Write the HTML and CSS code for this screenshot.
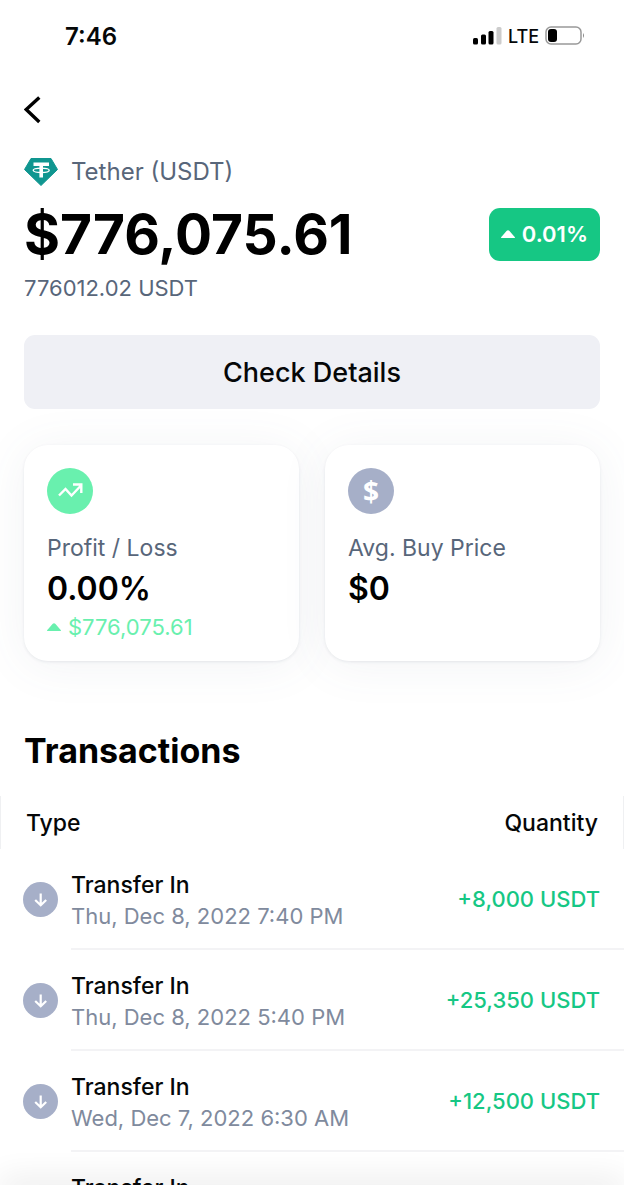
FILE: index.html
```html
<!DOCTYPE html>
<html lang="en">
<head>
<meta charset="utf-8">
<meta name="viewport" content="width=device-width, initial-scale=1">
<title>Tether (USDT)</title>
<link rel="stylesheet" href="styles.css">
</head>
<body>
<svg width="0" height="0" class="defs" aria-hidden="true">
  <symbol id="arrow-down" viewBox="0 0 35 35">
    <circle cx="17.5" cy="17.5" r="17.5" fill="#a6afc8"/>
    <path d="M17.7 11.5V23M12.2 18l5.5 5.3 5.5-5.3" fill="none" stroke="#fff" stroke-width="2.2"/>
  </symbol>
</svg>
<div class="app">
  <header class="status">
    <span class="time">7:46</span>
    <div class="signals">
      <svg width="29" height="20" viewBox="0 0 29 20" aria-hidden="true">
        <rect x="0" y="12" width="5" height="6.500" rx="1.500"/>
        <rect x="8" y="8.500" width="5" height="10" rx="1.500"/>
        <rect x="15.500" y="5" width="5" height="13.500" rx="1.500"/>
        <rect x="23.500" y="1" width="5" height="17.500" rx="1.500" fill="#ccc"/>
      </svg>
      <span class="lte">LTE</span>
      <svg width="40" height="20" viewBox="0 0 40 20" aria-hidden="true">
        <rect x="1" y="1" width="35" height="17" rx="5" fill="none" stroke="#999" stroke-width="1.500"/>
        <rect x="3" y="3" width="9" height="13" rx="3"/>
        <path d="M38 7q2 2.500 0 5z" fill="#888"/>
      </svg>
    </div>
  </header>

  <main class="content">
    <button class="back" type="button" aria-label="Back">
      <svg width="18" height="28" viewBox="0 0 18 28" aria-hidden="true"><path d="M15.300 1.500L2.200 13.500l13.100 12.500" fill="none" stroke="#000" stroke-width="3.400"/></svg>
    </button>

    <section class="summary">
      <div class="asset">
        <svg width="34" height="28" viewBox="0 0 34 28" aria-hidden="true">
          <path d="M7 .5h20L33.500 11.500 17 27.500.500 11.500z" fill="#109690" stroke="#109690" stroke-linejoin="round"/>
          <path d="M9.500 4.500h15.500v3.500h-6v11.500h-3.600V8H9.500z" fill="#fff"/>
          <ellipse cx="17.200" cy="12.300" rx="8" ry="2.200" fill="none" stroke="#fff" stroke-width="1.400"/>
        </svg>
        <span>Tether (USDT)</span>
      </div>
      <div class="balance">
        <h1 class="amount">$776,075.61</h1>
        <span class="badge">
          <svg width="14" height="8" viewBox="0 0 14 8" aria-hidden="true"><path d="M0 8q0-1 1-1.800L5.500 1Q7-.5 8.500 1L13 6.200Q14 7 14 8z" fill="currentColor"/></svg>
          0.01%
        </span>
      </div>
      <p class="units">776012.02 USDT</p>
    </section>

    <button class="details" type="button">Check Details</button>

    <section class="cards">
      <article class="card">
        <svg width="46" height="46" viewBox="0 0 46 46" aria-hidden="true">
          <circle cx="23" cy="23" r="23" fill="#69f0ae"/>
          <path d="M12 27.500l6.500-6.500 6 6.500 9.500-10M26 16.500h8.300v8.500" fill="none" stroke="#fff" stroke-width="2.400"/>
        </svg>
        <h2 class="label">Profit / Loss</h2>
        <p class="value">0.00%</p>
        <p class="change">
          <svg width="14" height="8" viewBox="0 0 14 8" aria-hidden="true"><path d="M0 8q0-1 1-1.800L5.500 1Q7-.5 8.500 1L13 6.200Q14 7 14 8z" fill="currentColor"/></svg>
          $776,075.61
        </p>
      </article>
      <article class="card">
        <span class="coin" aria-hidden="true">$</span>
        <h2 class="label">Avg. Buy Price</h2>
        <p class="value">$0</p>
      </article>
    </section>

    <h2 class="title">Transactions</h2>
    <table class="list">
      <thead>
        <tr><th class="type" colspan="2" scope="col">Type</th><th class="quantity" scope="col">Quantity</th></tr>
      </thead>
      <tbody>
        <tr>
          <td class="icon"><svg width="35" height="35" aria-hidden="true"><use href="#arrow-down"/></svg></td>
          <td class="entry"><div class="name">Transfer In</div><div class="date">Thu, Dec 8, 2022 7:40 PM</div></td>
          <td class="sum">+8,000 USDT</td>
        </tr>
        <tr>
          <td class="icon"><svg width="35" height="35" aria-hidden="true"><use href="#arrow-down"/></svg></td>
          <td class="entry"><div class="name">Transfer In</div><div class="date">Thu, Dec 8, 2022 5:40 PM</div></td>
          <td class="sum">+25,350 USDT</td>
        </tr>
        <tr>
          <td class="icon"><svg width="35" height="35" aria-hidden="true"><use href="#arrow-down"/></svg></td>
          <td class="entry"><div class="name">Transfer In</div><div class="date">Wed, Dec 7, 2022 6:30 AM</div></td>
          <td class="sum">+12,500 USDT</td>
        </tr>
        <tr>
          <td class="icon"><svg width="35" height="35" aria-hidden="true"><use href="#arrow-down"/></svg></td>
          <td class="entry"><div class="name">Transfer In</div><div class="date"></div></td>
          <td class="sum"></td>
        </tr>
      </tbody>
    </table>
  </main>
  <footer class="dock"></footer>
</div>
</body>
</html>
```

FILE: styles.css
```css
* { box-sizing: border-box; }

body {
  margin: 0;
  background: #fff;
  color: #050708;
  font-family: Inter, "Liberation Sans", sans-serif;
}

h1, h2, p { margin: 0; }

button {
  border: 0;
  padding: 0;
  background: none;
  color: inherit;
  font: inherit;
}

svg { display: block; flex: none; }

.defs { position: absolute; }

.app {
  display: flex;
  flex-direction: column;
  height: 100vh;
}

.status {
  display: flex;
  flex: none;
  align-items: center;
  justify-content: space-between;
  height: 72px;
  padding: 0 39px 0 65px;
}

.time { font-size: 24px; font-weight: 600; }

.signals { display: flex; align-items: center; gap: 6px; }

.lte { font-size: 18px; font-weight: 500; }

.content {
  flex: 1;
  min-height: 0;
  overflow: hidden;
}

.back {
  display: block;
  margin: 0 24px;
  padding: 24px 0 20px;
}

.summary { padding: 12px 24px 0; }

.asset {
  display: flex;
  align-items: center;
  gap: 13px;
  color: #58667a;
  font-size: 24px;
  line-height: 32px;
}

.balance {
  display: flex;
  align-items: center;
  justify-content: space-between;
  margin-top: 14px;
}

.amount {
  color: #000;
  font-size: 55px;
  font-weight: 700;
  line-height: 64px;
}

.badge {
  display: flex;
  align-items: center;
  gap: 7px;
  height: 53px;
  padding: 0 12px;
  border-radius: 11px;
  background: #16c784;
  color: #fff;
  font-size: 22px;
  font-weight: 600;
}

.units {
  margin-top: 8px;
  color: #58667a;
  font-size: 22px;
  line-height: 28px;
}

.details {
  display: block;
  width: calc(100% - 48px);
  height: 74px;
  margin: 33px 24px 36px;
  border-radius: 11px;
  background: #eff0f5;
  font-size: 27px;
  font-weight: 500;
}

.cards {
  display: grid;
  grid-template-columns: 1fr 1fr;
  gap: 26px;
  padding: 0 24px;
}

.card {
  min-height: 216px;
  padding: 23px 23px 21px;
  border-radius: 24px;
  background: #fff;
  box-shadow: 0 1px 3px rgba(88, 102, 126, 0.12), 0 4px 48px rgba(88, 102, 126, 0.08);
}

.coin {
  display: flex;
  align-items: center;
  justify-content: center;
  width: 46px;
  height: 46px;
  border-radius: 50%;
  background: #a6afc8;
  color: #fff;
  font-family: "Open Sans", sans-serif;
  font-size: 28px;
  font-weight: 700;
}

.label {
  margin-top: 18px;
  color: #58667a;
  font-size: 23px;
  font-weight: 400;
  line-height: 32px;
}

.value {
  color: #000;
  font-size: 32px;
  font-weight: 600;
  line-height: 50px;
}

.change {
  display: flex;
  align-items: center;
  gap: 7px;
  color: #69f0ae;
  font-size: 22px;
  line-height: 26px;
}

.title {
  margin: 68px 24px 0;
  color: #000;
  font-size: 34px;
  font-weight: 700;
  line-height: 44px;
}

.list {
  width: 100%;
  margin-top: 23px;
  border-collapse: separate;
  border-spacing: 0;
}

.list th {
  height: 53px;
  padding: 0 25px;
  font-size: 23px;
  font-weight: 500;
}

.list .type { border-left: 1px solid #eff0f2; text-align: left; }

.list .quantity { border-right: 1px solid #eff0f2; text-align: right; }

.list td { height: 101px; padding: 0; }

.list .icon { width: 71px; padding-left: 23px; }

.list .entry, .list .sum { border-bottom: 2px solid #f3f3f5; }

.list .entry { padding-top: 3px; }

.name {
  font-size: 23px;
  font-weight: 500;
  line-height: 32px;
}

.date {
  min-height: 30px;
  color: #808a9d;
  font-size: 22px;
  line-height: 30px;
}

.list .sum {
  padding-right: 24px;
  color: #16c784;
  font-size: 22px;
  font-weight: 500;
  text-align: right;
}

.dock {
  position: relative;
  flex: none;
  height: 15px;
  background: #fff;
  box-shadow: 0 -4px 32px rgba(0, 0, 0, 0.12);
}
```
